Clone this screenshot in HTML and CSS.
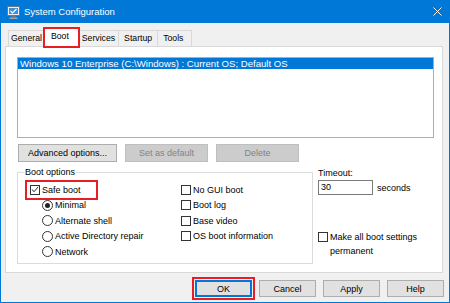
FILE: index.html
```html
<!DOCTYPE html>
<html lang="en">
<head>
    <meta charset="UTF-8">
    <title>System Configuration</title>
    <link rel="stylesheet" href="styles.css">
</head>
<body>
    <div class="window">
        <!-- Title bar -->
        <div class="titlebar">
            <svg class="app-icon" width="13" height="13" viewBox="0 0 13 13">
                <rect x="0.5" y="0.5" width="12" height="9" fill="#e8eef4" stroke="#6b7785"/>
                <rect x="2" y="2" width="9" height="6" fill="#3c8fd8"/>
                <path d="M3.5 5 L5.5 7 L9.5 3" fill="none" stroke="#ffffff" stroke-width="1.2"/>
                <rect x="4" y="10" width="5" height="1.5" fill="#6b7785"/>
                <rect x="2.5" y="11.5" width="8" height="1.5" fill="#9aa4ae"/>
            </svg>
            <span class="title">System Configuration</span>
            <svg class="close" width="9" height="9" viewBox="0 0 9 9">
                <path d="M0.5 0.5 L8.5 8.5 M8.5 0.5 L0.5 8.5" stroke="#ffffff" stroke-width="1"/>
            </svg>
        </div>

        <div class="client">
            <!-- Tabs -->
            <div class="tabs">
                <div class="tab">General</div>
                <div class="tab active marked">Boot</div>
                <div class="tab services">Services</div>
                <div class="tab startup">Startup</div>
                <div class="tab tools">Tools</div>
            </div>

            <div class="panel">
                <div class="listbox">
                    <div class="list-item selected">Windows 10 Enterprise (C:\Windows) : Current OS; Default OS</div>
                </div>

                <div class="button-row">
                    <button class="btn advanced">Advanced options...</button>
                    <button class="btn mid" disabled>Set as default</button>
                    <button class="btn mid" disabled>Delete</button>
                </div>

                <div class="options">
                    <fieldset class="group">
                        <legend>Boot options</legend>
                        <div class="group-cols">
                            <div class="col-left">
                                <div class="row">
                                    <label class="check marked"><span class="box checked">
                                        <svg width="9" height="9" viewBox="0 0 9 9"><path d="M1 4.5 L3.5 7 L8 1.5" fill="none" stroke="#222" stroke-width="1.1"/></svg>
                                    </span>Safe boot</label>
                                </div>
                                <div class="row sub"><span class="dot on"></span>Minimal</div>
                                <div class="row sub"><span class="dot"></span>Alternate shell</div>
                                <div class="row sub"><span class="dot"></span>Active Directory repair</div>
                                <div class="row sub"><span class="dot"></span>Network</div>
                            </div>
                            <div class="col-right">
                                <div class="row"><span class="box"></span>No GUI boot</div>
                                <div class="row"><span class="box"></span>Boot log</div>
                                <div class="row"><span class="box"></span>Base video</div>
                                <div class="row"><span class="box"></span>OS boot information</div>
                            </div>
                        </div>
                    </fieldset>

                    <div class="timeout">
                        <div class="timeout-label">Timeout:</div>
                        <div class="timeout-row">
                            <div class="textbox">30</div>
                            <span>seconds</span>
                        </div>
                        <div class="permanent">
                            <span class="box"></span>
                            <span>Make all boot settings<br>permanent</span>
                        </div>
                    </div>
                </div>
            </div>

            <!-- Dialog buttons -->
            <div class="footer">
                <button class="btn default marked">OK</button>
                <button class="btn">Cancel</button>
                <button class="btn">Apply</button>
                <button class="btn">Help</button>
            </div>
        </div>
    </div>
</body>
</html>
```

FILE: styles.css
```css
body {
    margin: 0;
    font-family: "Liberation Sans", Arial, sans-serif;
    font-size: 9px;
    color: #000;
    background-color: #f0f0f0;
}

.window {
    width: 450px;
    height: 303px;
    box-sizing: border-box;
    border: 1px solid #0078d7;
    border-top: none;
    background-color: #f0f0f0;
    display: flex;
    flex-direction: column;
}

/* Title bar */
.titlebar {
    height: 23px;
    margin: 0 -1px;
    background-color: #0078d7;
    display: flex;
    align-items: center;
    color: #fff;
}

.app-icon {
    margin-left: 7px;
    margin-top: 1px;
}

.title {
    margin-left: 4px;
    font-size: 9.5px;
}

.close {
    margin-left: auto;
    margin-right: 8px;
}

.client {
    flex: 1;
    display: flex;
    flex-direction: column;
}

/* Tabs */
.tabs {
    display: flex;
    align-items: flex-end;
    margin-top: 5px;
    padding-left: 7px;
    height: 18px;
}

.tab {
    height: 16px;
    box-sizing: border-box;
    padding: 0 2px;
    line-height: 15px;
    font-size: 8.7px;
    border: 1px solid #d9d9d9;
    border-bottom: none;
    border-left: none;
    background-color: #f0f0f0;
}

.tab:first-child {
    border-left: 1px solid #d9d9d9;
}

.tab.services {
    padding: 0 3px;
}

.tab.startup {
    padding: 0 5px;
}

.tab.tools {
    padding: 0 8px 0 5px;
}

.tab.active {
    height: 19px;
    margin-bottom: -1px;
    margin-left: -1px;
    padding: 0 9px 0 6px;
    background-color: #fff;
    border-left: 1px solid #d9d9d9;
    position: relative;
    z-index: 1;
}

.marked {
    outline: 2px solid #e81e25;
}

.tab.marked {
    outline-offset: -1px;
}

/* Panel */
.panel {
    margin-left: 4px;
    width: 438px;
    height: 227px;
    box-sizing: border-box;
    border: 1px solid #d9d9d9;
    background-color: #fff;
    padding: 10px 0 0 11px;
}

.listbox {
    width: 417px;
    height: 81px;
    box-sizing: border-box;
    border: 1px solid #adadad;
}

.list-item {
    height: 11px;
    line-height: 11px;
    padding-left: 2px;
    font-size: 9.6px;
}

.list-item.selected {
    background-color: #0078d7;
    color: #fff;
}

.button-row {
    display: flex;
    gap: 8px;
    margin-top: 6px;
    padding-left: 1px;
}

.btn {
    font-family: inherit;
    font-size: 9px;
    height: 17px;
    width: 57px;
    padding: 0;
    background-color: #e1e1e1;
    border: 1px solid #adadad;
    color: #000;
}

.btn:disabled {
    background-color: #cccccc;
    border-color: #bfbfbf;
    color: #838383;
}

.btn.advanced {
    width: 99px;
    height: 18px;
}

.btn.mid {
    width: 83px;
    height: 18px;
}

.btn.default {
    border: 2px solid #0078d7;
}

/* Boot options */
.options {
    display: flex;
    margin-top: 5px;
}

.group {
    width: 296px;
    height: 97px;
    box-sizing: border-box;
    margin: 0;
    padding: 4px 0 0 12px;
    border: 1px solid #dcdcdc;
}

.group legend {
    padding: 0 1px;
    margin-left: -6px;
    line-height: 11px;
}

.group-cols {
    display: flex;
}

.col-left {
    width: 151px;
}

.row {
    height: 15.5px;
    display: flex;
    align-items: center;
}

.row.sub {
    padding-left: 12px;
}

.check {
    display: flex;
    align-items: center;
}

.check.marked {
    outline-offset: 3px;
    padding-right: 12px;
}

.box {
    width: 10px;
    height: 10px;
    box-sizing: border-box;
    border: 1px solid #333;
    background-color: #fff;
    margin-right: 2px;
    display: flex;
    align-items: center;
    justify-content: center;
}

.dot {
    width: 11px;
    height: 11px;
    box-sizing: border-box;
    border: 1px solid #333;
    border-radius: 50%;
    margin-right: 2px;
    display: flex;
    align-items: center;
    justify-content: center;
}

.dot.on::after {
    content: "";
    width: 5px;
    height: 5px;
    border-radius: 50%;
    background-color: #222;
}

/* Timeout */
.timeout {
    margin-left: 5px;
    padding-top: 1px;
}

.timeout-row {
    display: flex;
    align-items: center;
    gap: 4px;
    margin-top: 2px;
}

.textbox {
    width: 55px;
    height: 15px;
    box-sizing: border-box;
    border: 1px solid #7a7a7a;
    padding-left: 2px;
    line-height: 13px;
}

.permanent {
    display: flex;
    align-items: flex-start;
    margin-top: 35px;
    line-height: 14px;
}

.permanent .box {
    margin-top: 2px;
}

/* Footer */
.footer {
    display: flex;
    justify-content: flex-end;
    gap: 7px;
    margin-top: 7px;
    padding-right: 5px;
}

.btn.marked {
    outline-offset: 1px;
}
```
